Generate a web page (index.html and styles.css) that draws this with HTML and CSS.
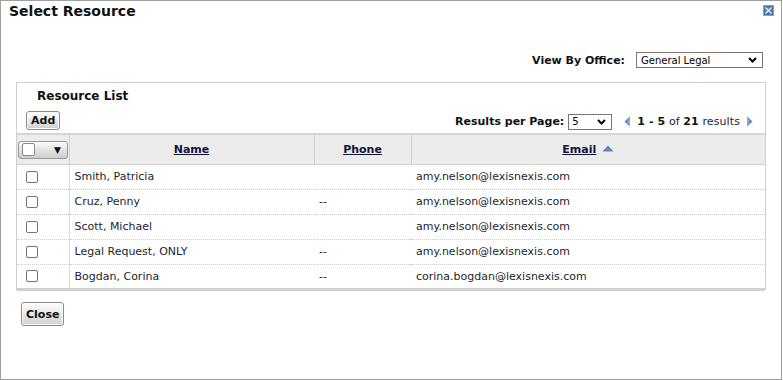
FILE: index.html
```html
<!DOCTYPE html>
<html>
<head>
<meta charset="utf-8">
<link rel="stylesheet" href="styles.css">
</head>
<body>
<div class="dialog">
  <div class="titlebar">
    <h1 class="title">Select Resource</h1>
    <span class="close-x" title="Close">
      <svg width="11" height="11" viewBox="0 0 11 11"><rect x="0" y="0" width="11" height="11" fill="#4b77ad"/><rect x="0.5" y="0.5" width="10" height="10" fill="none" stroke="#7fa3cf"/><path d="M2.5 2.5 L8.5 8.5 M8.5 2.5 L2.5 8.5" stroke="#fff" stroke-width="1.1"/></svg>
    </span>
  </div>
  <div class="office-row">
    <label class="office-label">View By Office:</label>
    <div class="select office-select"><span>General Legal</span><svg class="chev" width="9" height="6" viewBox="0 0 9 6"><path d="M1 1 L4.5 4.5 L8 1" fill="none" stroke="#000" stroke-width="2"/></svg></div>
  </div>
  <div class="panel">
    <div class="panel-title">Resource List</div>
    <div class="toolbar">
      <button class="btn">Add</button>
      <div class="paging">
        <span class="rpp-label">Results per Page:</span>
        <div class="select rpp-select"><span>5</span><svg class="chev" width="9" height="6" viewBox="0 0 9 6"><path d="M1 1 L4.5 4.5 L8 1" fill="none" stroke="#000" stroke-width="2"/></svg></div>
        <svg class="arrow" width="7" height="11" viewBox="0 0 7 11"><path d="M6 0.5 L0.5 5.5 L6 10.5 Z" fill="#5b87bd"/><path d="M6 0.5 L6 10.5 L3.5 5.5 Z" fill="#8fb0d8"/></svg>
        <span class="count"><b>1 - 5</b> of <b>21</b> results</span>
        <svg class="arrow" width="7" height="11" viewBox="0 0 7 11"><path d="M1 0.5 L6.5 5.5 L1 10.5 Z" fill="#5b87bd"/><path d="M1 0.5 L1 10.5 L3.5 5.5 Z" fill="#8fb0d8"/></svg>
      </div>
    </div>
    <table class="grid">
      <thead>
        <tr>
          <th class="c-check"><div class="check-menu"><span class="cb"></span><span class="tri">&#9660;</span></div></th>
          <th class="c-name"><a>Name</a></th>
          <th class="c-phone"><a>Phone</a></th>
          <th class="c-email"><a>Email</a> <svg class="sort" width="12" height="7" viewBox="0 0 12 7"><path d="M0.5 6.5 L6 0.5 L11.5 6.5 Z" fill="#5b87bd"/></svg></th>
        </tr>
      </thead>
      <tbody>
        <tr><td class="c-check"><span class="cb"></span></td><td>Smith, Patricia</td><td></td><td>amy.nelson@lexisnexis.com</td></tr>
        <tr><td class="c-check"><span class="cb"></span></td><td>Cruz, Penny</td><td>--</td><td>amy.nelson@lexisnexis.com</td></tr>
        <tr><td class="c-check"><span class="cb"></span></td><td>Scott, Michael</td><td></td><td>amy.nelson@lexisnexis.com</td></tr>
        <tr><td class="c-check"><span class="cb"></span></td><td>Legal Request, ONLY</td><td>--</td><td>amy.nelson@lexisnexis.com</td></tr>
        <tr><td class="c-check"><span class="cb"></span></td><td>Bogdan, Corina</td><td>--</td><td>corina.bogdan@lexisnexis.com</td></tr>
      </tbody>
    </table>
  </div>
  <div class="footer">
    <button class="btn btn-close">Close</button>
  </div>
</div>
</body>
</html>
```

FILE: styles.css
```css
* { box-sizing: border-box; }
html, body { margin: 0; padding: 0; background: #fff; }
body {
  font-family: "DejaVu Sans", Verdana, sans-serif;
  font-size: 11px;
  color: #1e1e2e;
}
.dialog {
  width: 782px;
  height: 380px;
  border: 1px solid #a0a0a0;
  background: #fff;
}
.titlebar {
  display: flex;
  justify-content: space-between;
  align-items: flex-start;
  height: 40px;
}
.title {
  margin: 0;
  padding: 2px 0 0 8px;
  font-size: 14px;
  font-weight: bold;
  color: #111;
}
.close-x { display: block; margin: 4px 7px 0 0; line-height: 0; }
.office-row {
  display: flex;
  justify-content: flex-end;
  align-items: center;
  padding-right: 18px;
  height: 24px;
  margin-top: 7px;
}
.office-label { font-weight: bold; font-size: 11px; color: #111; margin-right: 11px; }
.select {
  display: flex;
  align-items: center;
  justify-content: space-between;
  border: 1px solid #767676;
  background: #fff;
  height: 16px;
  padding: 0 5px 0 4px;
  font-size: 10px;
  color: #000;
}
.office-select { width: 127px; }
.rpp-select { width: 44px; margin-left: 4px; padding-left: 3px; }
.panel {
  margin: 10px 0 0 15px;
  width: 750px;
  height: 208px;
  border: 1px solid #cfcfcf;
}
.panel-title {
  font-weight: bold;
  font-size: 12px;
  color: #111;
  padding: 6px 0 0 20px;
  height: 26px;
}
.toolbar {
  display: flex;
  justify-content: space-between;
  align-items: center;
  padding: 0 0 0 9px;
  height: 22px;
}
.btn {
  font-family: "DejaVu Sans", Verdana, sans-serif;
  font-weight: bold;
  font-size: 11px;
  color: #111;
  border: 1px solid #8a8a8a;
  border-radius: 3px;
  background: linear-gradient(#ffffff, #e6e6e6 55%, #cfcfcf);
  box-shadow: inset 0 0 0 1px #fff;
  padding: 0 4px;
  height: 19px;
  margin: 0;
}
.paging { display: flex; align-items: center; padding-right: 12px; margin-top: 3px; }
.rpp-label { font-weight: bold; font-size: 11px; color: #111; }
.arrow { margin: 0 6px 0 12px; }
.paging .arrow:last-child { margin: 0 0 0 6px; }
.count { color: #1e1e3e; font-size: 11px; letter-spacing: 0.1px; }
.count b { color: #111; }
.grid {
  width: 748px;
  border-collapse: collapse;
  margin-top: 2px;
  border-bottom: 3px double #d0d0d0;
}
.grid th {
  background: #ececec;
  height: 30px;
  border: 1px solid #cfcfcf;
  border-top: 2px solid #d6d6d6;
  font-weight: bold;
  font-size: 11px;
  text-align: center;
  color: #14143a;
  padding: 1px 0 0;
}
.grid th:first-child { border-left: none; }
.grid th:last-child { border-right: none; }
.grid th a { text-decoration: underline; }
.grid td {
  height: 25px;
  border-top: 1px dotted #cccccc;
  padding: 0 0 0 5px;
  white-space: nowrap;
}
.grid td.c-check { border-right: 1px solid #dcdcdc; padding-left: 9px; }
.grid tbody tr:first-child td { border-top: none; }
.c-check { width: 52px; }
.c-name { width: 245px; }
.c-phone { width: 97px; }
.sort { margin-left: 2px; vertical-align: 1px; }
.cb {
  display: block;
  width: 12px;
  height: 12px;
  border: 1px solid #767676;
  border-radius: 2px;
  background: #fff;
}
.check-menu {
  display: flex;
  align-items: center;
  justify-content: space-between;
  width: 50px;
  height: 18px;
  margin-left: 1px;
  padding: 0 6px 0 3px;
  border: 1px solid #9a9a9a;
  border-radius: 3px;
  background: linear-gradient(#fdfdfd, #e4e4e4 50%, #cccccc);
}
.check-menu .cb { width: 13px; height: 13px; border-color: #8a8a8a; }
.tri { font-size: 9px; color: #111; }
.footer { padding: 12px 0 0 20px; }
.btn-close { height: 24px; padding: 0 4px; font-size: 11px; }
```
